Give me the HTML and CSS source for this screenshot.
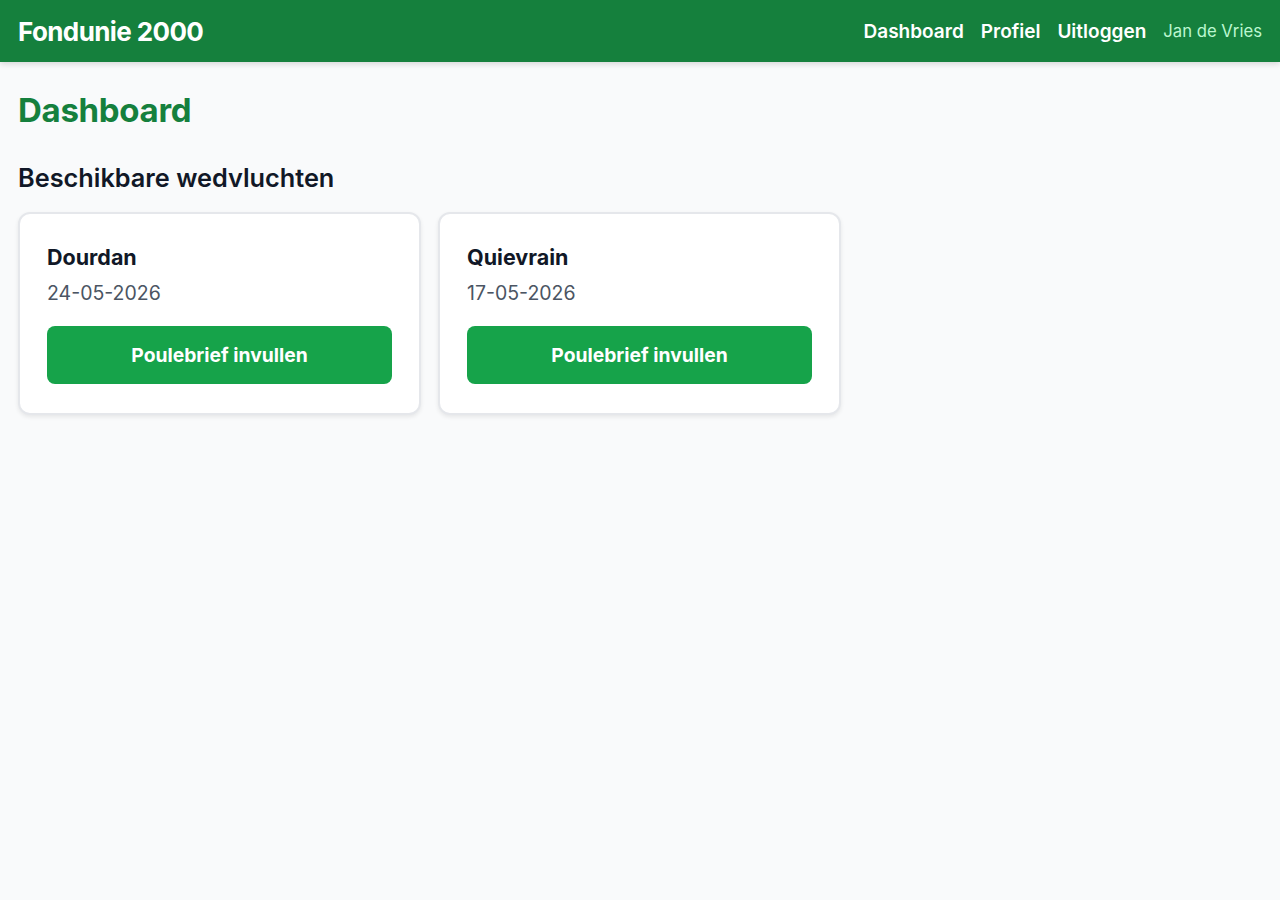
FILE: index.html
```html
<!DOCTYPE html>
<html lang="nl">
<head>
    <meta charset="UTF-8">
    <meta name="viewport" content="width=device-width, initial-scale=1.0">
    <title>Fondunie 2000 - Dashboard</title>
    <link rel="stylesheet" href="styles.css">
</head>
<body>
    <header class="topbar">
        <div class="brand">Fondunie 2000</div>
        <nav class="nav">
            <a href="#" class="nav-link">Dashboard</a>
            <a href="#" class="nav-link">Profiel</a>
            <a href="#" class="nav-link">Uitloggen</a>
            <span class="nav-user">Jan de Vries</span>
        </nav>
    </header>

    <main class="content">
        <h1>Dashboard</h1>
        <h2>Beschikbare wedvluchten</h2>
        <div class="race-list">
            <div class="race-card">
                <div class="race-name">Dourdan</div>
                <div class="race-date">24-05-2026</div>
                <button class="race-button">Poulebrief invullen</button>
            </div>
            <div class="race-card">
                <div class="race-name">Quievrain</div>
                <div class="race-date">17-05-2026</div>
                <button class="race-button">Poulebrief invullen</button>
            </div>
        </div>
    </main>
</body>
</html>
```

FILE: styles.css
```css
* {
    box-sizing: border-box;
}
body {
    font-family: Inter, "Noto Sans", Arial, sans-serif;
    background-color: #f9fafb;
    margin: 0;
    color: #111827;
}
.topbar {
    background: #15803d;
    height: 62px;
    padding: 0 18px;
    display: flex;
    align-items: center;
    justify-content: space-between;
    box-shadow: 0 2px 6px rgba(0, 0, 0, 0.15);
}
.brand {
    color: #fff;
    font-size: 26px;
    font-weight: 700;
    letter-spacing: -0.6px;
}
.nav {
    display: flex;
    align-items: center;
    gap: 17px;
}
.nav-link {
    color: #fff;
    text-decoration: none;
    font-size: 19px;
    font-weight: 600;
}
.nav-user {
    color: #bbf7d0;
    font-size: 16.7px;
}
.content {
    padding: 18px;
}
h1 {
    color: #15803d;
    font-size: 33px;
    font-weight: 700;
    margin: 10px 0 32px;
    letter-spacing: -0.3px;
}
h2 {
    font-size: 25.3px;
    font-weight: 600;
    margin: 0 0 19px;
}
.race-list {
    display: flex;
    gap: 17px;
}
.race-card {
    width: 403px;
    background: #fff;
    border: 2px solid #e5e7eb;
    border-radius: 12px;
    box-shadow: 0 2px 4px rgba(0, 0, 0, 0.08);
    padding: 30px 27px 29px;
}
.race-name {
    font-size: 21.5px;
    line-height: 26px;
    font-weight: 700;
}
.race-date {
    color: #4b5563;
    font-size: 19.5px;
    line-height: 24px;
    margin: 11px 0 21px;
}
.race-button {
    width: 100%;
    height: 58px;
    background: #16a34a;
    color: #fff;
    border: none;
    border-radius: 8px;
    font-family: inherit;
    font-size: 19.3px;
    font-weight: 700;
    cursor: pointer;
}
```
